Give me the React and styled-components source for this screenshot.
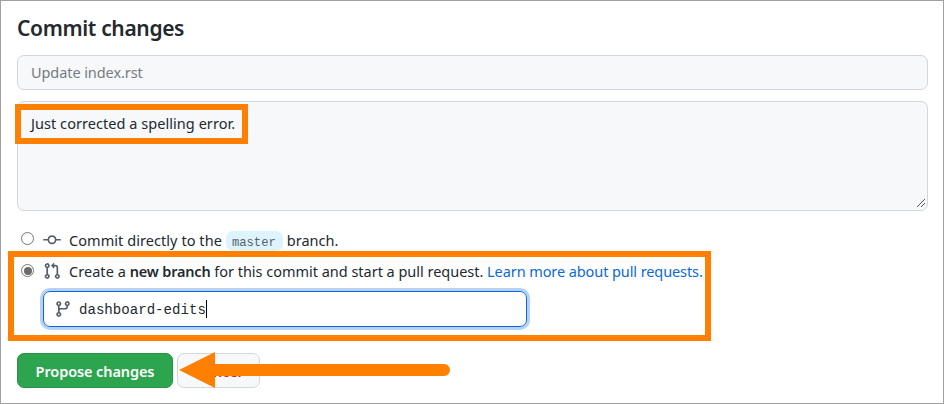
import React from 'react';
import styled, { createGlobalStyle } from 'styled-components';

const GlobalStyle = createGlobalStyle`
  * { box-sizing: border-box; }
  body { margin: 0; background: #fff; }
`;

const Page = styled.main`
  position: relative;
  width: 944px;
  height: 404px;
  padding: 13px 15px 0 16px;
  border: 1px solid #a0a0a0;
  overflow: hidden;
  background: #fff;
  color: #24292f;
  font: 14.5px/22px "Noto Sans", sans-serif;
`;

const Heading = styled.h1`
  margin: 0 0 13px;
  height: 28px;
  font-size: 21px;
  line-height: 28px;
  font-weight: 600;
`;

const Text = styled.span`
  letter-spacing: ${(p) => p.$tracking || 0}px;
  white-space: pre;
`;

const SummaryInput = styled.div`
  height: 35px;
  padding: 5px 13px;
  border: 1px solid #d0d7de;
  border-radius: 7px;
  background: #f6f8fa;
  color: #757b81;
`;

const Description = styled.div`
  position: relative;
  height: 110px;
  margin-top: 11px;
  padding: 10px 13px;
  border: 1px solid #d0d7de;
  border-radius: 7px;
  background: #f6f8fa;
`;

const Grip = styled.svg`
  position: absolute;
  right: 2px;
  bottom: 2px;
`;

const Options = styled.div`
  margin-top: 17px;
`;

const Option = styled.div`
  display: flex;
  align-items: center;
  height: ${(p) => p.$height}px;
  padding-left: 4px;
`;

const Radio = styled.span`
  display: grid;
  place-items: center;
  flex: none;
  width: 13px;
  height: 13px;
  margin: 0 9px ${(p) => (p.$checked ? 1 : 3)}px 0;
  border: 1px solid #767676;
  border-radius: 50%;

  &::after {
    content: "";
    width: 8px;
    height: 8px;
    border-radius: 50%;
    background: ${(p) => (p.$checked ? '#6b6b6b' : 'transparent')};
  }
`;

const Icon = styled.svg`
  flex: none;
  width: 18px;
  height: 18px;
  margin-right: ${(p) => p.$gap || 8}px;
  fill: #57606a;
  fill-rule: evenodd;
`;

const Branch = styled.code`
  height: 20px;
  margin: 1px 4px 0;
  padding: 0 7px 0 6px;
  border-radius: 7px;
  background: #ddf4ff;
  color: #57606a;
  font: 12.2px/24px "Liberation Mono", monospace;
`;

const Strong = styled.strong`
  font-weight: 600;
  white-space: pre;
  letter-spacing: ${(p) => p.$tracking}px;
`;

const Link = styled.a`
  color: #0969da;
  white-space: pre;
  letter-spacing: ${(p) => p.$tracking || 0}px;
`;

const BranchField = styled.div`
  display: flex;
  align-items: center;
  width: 484px;
  height: 36px;
  margin: 1px 0 0 26px;
  padding-left: 10px;
  border: 1px solid #0969da;
  border-radius: 7px;
  box-shadow: 0 0 0 3px #b5d1f4;
  font: 14.1px/20px "Liberation Mono", monospace;
`;

const BranchName = styled.span`
  padding-top: 2px;
`;

const Caret = styled.span`
  width: 1px;
  height: 18px;
  background: #000;
`;

const Actions = styled.div`
  display: flex;
  gap: 4px;
  margin-top: 26px;
`;

const Button = styled.button`
  width: ${(p) => p.$width}px;
  height: 35px;
  padding: 0;
  border: 1px solid ${(p) => (p.$primary ? '#2a9147' : '#d5d8db')};
  border-radius: 7px;
  background: ${(p) => (p.$primary ? '#2da44e' : '#f6f8fa')};
  color: ${(p) => (p.$primary ? '#fff' : '#cf222e')};
  font: 600 14.5px/22px "Noto Sans", sans-serif;
  letter-spacing: -0.1px;
  white-space: nowrap;
`;

const Highlight = styled.div`
  position: absolute;
  left: ${(p) => p.$x - 1}px;
  top: ${(p) => p.$y - 1}px;
  width: ${(p) => p.$w}px;
  height: ${(p) => p.$h}px;
  border: 6px solid #ff8000;
`;

const Arrow = styled.svg`
  position: absolute;
  left: 178px;
  top: 350px;
`;

export default function App() {
  return (
    <>
      <GlobalStyle />
      <Page>
        <Heading><Text $tracking={-0.35}>Commit changes</Text></Heading>
        <SummaryInput><Text $tracking={-0.08}>Update index.rst</Text></SummaryInput>
        <Description>
          <Text $tracking={0.05}>Just corrected a spelling error.</Text>
          <Grip width="9" height="9" viewBox="0 0 9 9" shapeRendering="crispEdges">
            <path d="M0.5 8.5L8.5 .5M4.5 8.5L8.5 4.5" stroke="#555" fill="none" />
          </Grip>
        </Description>
        <Options>
          <Option $height={24}>
            <Radio />
            <Icon viewBox="0 0 16 16">
              <path d="M10.5 7.75a2.5 2.5 0 11-5 0 2.5 2.5 0 015 0zm1.43.75a4.002 4.002 0 01-7.86 0H.75a.75.75 0 110-1.5h3.32a4.001 4.001 0 017.86 0h3.32a.75.75 0 110 1.5h-3.32z" />
            </Icon>
            <Text $tracking={0.06}>Commit directly to the</Text>
            <Branch>master</Branch>
            <Text>branch.</Text>
          </Option>
          <Option $height={38}>
            <Radio $checked />
            <Icon viewBox="0 0 16 16">
              <path d="M7.177 3.073L9.573.677A.25.25 0 0110 .854v4.792a.25.25 0 01-.427.177L7.177 3.427a.25.25 0 010-.354zM3.75 2.5a.75.75 0 100 1.5.75.75 0 000-1.5zm-2.25.75a2.25 2.25 0 113 2.122v5.256a2.251 2.251 0 11-1.5 0V5.372A2.25 2.25 0 011.5 3.25zM11 2.5h-1V4h1a1 1 0 011 1v5.628a2.251 2.251 0 101.5 0V5A2.5 2.5 0 0011 2.5zm1 10.25a.75.75 0 111.5 0 .75.75 0 01-1.5 0zM3.75 12a.75.75 0 100 1.5.75.75 0 000-1.5z" />
            </Icon>
            <Text $tracking={0.05}>Create a </Text>
            <Strong $tracking={-0.18}>new branch</Strong>
            <Text $tracking={-0.02}> for this commit and start a pull request. </Text>
            <Link $tracking={-0.09}>Learn more about pull requests.</Link>
          </Option>
          <BranchField>
            <Icon $gap={7} viewBox="0 0 16 16">
              <path d="M11.75 2.5a.75.75 0 100 1.5.75.75 0 000-1.5zm-2.25.75a2.25 2.25 0 113 2.122V6A2.5 2.5 0 0110 8.5H6a1 1 0 00-1 1v1.128a2.251 2.251 0 11-1.5 0V5.372a2.25 2.25 0 111.5 0v1.836A2.492 2.492 0 016 7h4a1 1 0 001-1v-.628A2.25 2.25 0 019.5 3.25zM4.25 12a.75.75 0 100 1.5.75.75 0 000-1.5zM3.5 3.25a.75.75 0 111.5 0 .75.75 0 01-1.5 0z" />
            </Icon>
            <BranchName>dashboard-edits</BranchName>
            <Caret />
          </BranchField>
        </Options>
        <Actions>
          <Button $primary $width={156}>Propose changes</Button>
          <Button $width={83}>Cancel</Button>
        </Actions>
        <Highlight $x={15} $y={104} $w={233} $h={40} />
        <Highlight $x={8} $y={251} $w={703} $h={90} />
        <Arrow width="274" height="38" viewBox="0 0 274 38">
          <path d="M0 19L36 1V13H265A6 6 0 0 1 265 25H36V37Z" fill="#ff8000" />
        </Arrow>
      </Page>
    </>
  );
}
